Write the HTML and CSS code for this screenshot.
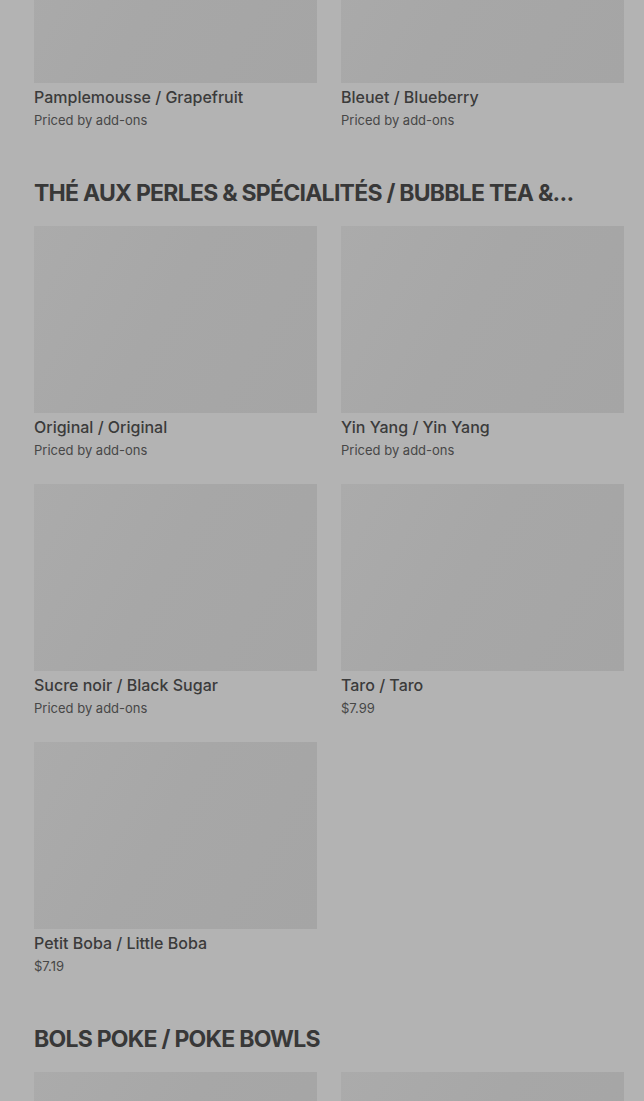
FILE: index.html
```html
<!DOCTYPE html>
<html lang="en">
<head>
    <meta charset="UTF-8">
    <meta name="viewport" content="width=device-width, initial-scale=1.0">
    <title>Menu</title>
    <link rel="stylesheet" href="styles.css">
</head>
<body>
    <div class="menu">
        <section class="menu-section">
            <div class="item-grid">
                <div class="item">
                    <div class="item-photo"></div>
                    <div class="item-name">Pamplemousse / Grapefruit</div>
                    <div class="item-price">Priced by add-ons</div>
                </div>
                <div class="item">
                    <div class="item-photo"></div>
                    <div class="item-name">Bleuet / Blueberry</div>
                    <div class="item-price">Priced by add-ons</div>
                </div>
            </div>
        </section>

        <section class="menu-section">
            <h2 class="section-title">THÉ AUX PERLES &amp; SPÉCIALITÉS / BUBBLE TEA &amp;...</h2>
            <div class="item-grid">
                <div class="item">
                    <div class="item-photo"></div>
                    <div class="item-name">Original / Original</div>
                    <div class="item-price">Priced by add-ons</div>
                </div>
                <div class="item">
                    <div class="item-photo"></div>
                    <div class="item-name">Yin Yang / Yin Yang</div>
                    <div class="item-price">Priced by add-ons</div>
                </div>
                <div class="item">
                    <div class="item-photo"></div>
                    <div class="item-name">Sucre noir / Black Sugar</div>
                    <div class="item-price">Priced by add-ons</div>
                </div>
                <div class="item">
                    <div class="item-photo"></div>
                    <div class="item-name">Taro / Taro</div>
                    <div class="item-price">$7.99</div>
                </div>
                <div class="item">
                    <div class="item-photo"></div>
                    <div class="item-name">Petit Boba / Little Boba</div>
                    <div class="item-price">$7.19</div>
                </div>
            </div>
        </section>

        <section class="menu-section">
            <h2 class="section-title">BOLS POKE / POKE BOWLS</h2>
            <div class="item-grid">
                <div class="item">
                    <div class="item-photo"></div>
                </div>
                <div class="item">
                    <div class="item-photo"></div>
                </div>
            </div>
        </section>
    </div>
</body>
</html>
```

FILE: styles.css
```css
body {
    font-family: Inter, "Noto Sans", sans-serif;
    margin: 0;
    background-color: #b3b3b3;
    color: #3a3a3a;
    overflow: hidden;
}

.menu {
    margin-top: -104px;
    padding: 0 20px 0 34px;
}

.menu-section {
    margin-bottom: 47px;
}

.section-title {
    margin: 0 0 17px;
    font-size: 23px;
    line-height: 32px;
    font-weight: 700;
    letter-spacing: -0.75px;
    color: #383838;
}

.item-grid {
    display: grid;
    grid-template-columns: 1fr 1fr;
    column-gap: 24px;
    row-gap: 24px;
}

.item-photo {
    height: 187px;
    background: linear-gradient(120deg, #ababab 0%, #a7a7a7 45%, #a5a5a5 100%);
}

.item-name {
    margin-top: 3px;
    font-size: 16px;
    line-height: 22px;
    font-weight: 500;
    color: #3b3b3b;
}

.item-price {
    margin-top: 2px;
    font-size: 13px;
    line-height: 20px;
    color: #474747;
}
```
